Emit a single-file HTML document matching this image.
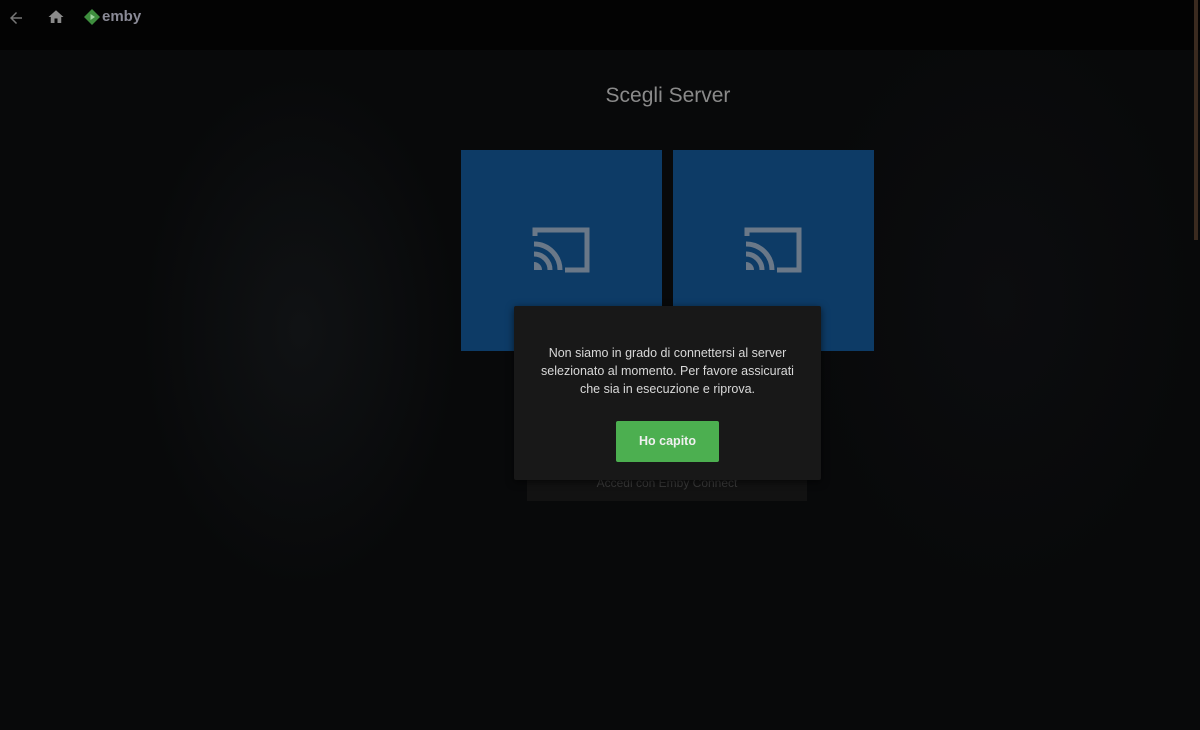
<!DOCTYPE html>
<html><head><meta charset="utf-8"><style>
html,body{margin:0;padding:0;width:1200px;height:730px;overflow:hidden;background:#08090a;font-family:"Liberation Sans",sans-serif;}
.bg{position:absolute;inset:0;background:
radial-gradient(ellipse 160px 260px at 300px 330px,#101214,transparent),
radial-gradient(ellipse 200px 300px at 1000px 300px,#0c0d0f,transparent),
#08090a;}
.hdr{position:absolute;left:0;top:0;width:1200px;height:50px;background:#030303;}
.sb{position:absolute;left:1194px;top:0;width:4px;height:240px;background:#3a2a1f;}
.title{position:absolute;left:0;width:1336px;top:84px;text-align:center;color:#8a8a8a;font-size:21px;}
.tile{position:absolute;top:150px;width:201px;height:201px;background:#0d3b66;}
.tile svg{position:absolute;left:71px;top:76px;}
.conn{position:absolute;left:527px;top:470px;width:280px;height:31px;background:#121212;color:#3a3a3a;font-size:12px;text-align:center;line-height:24px;padding-top:1px;box-sizing:border-box;}
.dlg{position:absolute;left:514px;top:306px;width:307px;height:174px;background:#181818;border-radius:2px;box-shadow:0 2px 8px rgba(0,0,0,.6);}
.dlg p{margin:0;position:absolute;left:0;right:0;top:38px;text-align:center;color:#d8d8d8;font-size:12.5px;line-height:18px;}
.btn{position:absolute;left:102px;top:115px;width:103px;height:41px;background:#4caf50;color:#f0f0f0;font-weight:bold;font-size:12.5px;text-align:center;line-height:41px;border-radius:2px;}
</style></head><body>
<div class="bg"></div>
<div class="hdr">
<svg style="position:absolute;left:7px;top:9px" width="18" height="18" viewBox="0 0 24 24"><path d="M20 11H7.8l5.6-5.6L12 4l-8 8 8 8 1.4-1.4L7.8 13H20z" fill="#777"/></svg>
<svg style="position:absolute;left:47px;top:8px" width="18" height="18" viewBox="0 0 24 24"><path d="M10 20v-6h4v6h5v-8h3L12 3 2 12h3v8z" fill="#8a8a8a"/></svg>
<svg style="position:absolute;left:84px;top:9px" width="16" height="16" viewBox="0 0 16 16"><path d="M8 0L16 8 8 16 0 8z" fill="#3e8e3e"/><path d="M6.5 5v6l4.5-3z" fill="#9ed49e"/></svg>
<div style="position:absolute;left:102px;top:8px;color:#8a8a96;font-size:15px;font-weight:bold;">emby</div>
</div>
<div class="sb"></div>
<div class="title">Scegli Server</div>
<div class="tile" style="left:461px"><svg width="58" height="48" viewBox="0 0 58 48"><path d="M3 10V4h52v40H33" fill="none" stroke="#6a7888" stroke-width="5"/><path d="M2 18a26 26 0 0 1 26 26M2 28a16 16 0 0 1 16 16" fill="none" stroke="#6a7888" stroke-width="5"/><path d="M2 36a8 8 0 0 1 8 8H2z" fill="#6a7888"/></svg></div>
<div class="tile" style="left:673px"><svg width="58" height="48" viewBox="0 0 58 48"><path d="M3 10V4h52v40H33" fill="none" stroke="#6a7888" stroke-width="5"/><path d="M2 18a26 26 0 0 1 26 26M2 28a16 16 0 0 1 16 16" fill="none" stroke="#6a7888" stroke-width="5"/><path d="M2 36a8 8 0 0 1 8 8H2z" fill="#6a7888"/></svg></div>
<div class="conn">Accedi con Emby Connect</div>
<div class="dlg"><p>Non siamo in grado di connettersi al server<br>selezionato al momento. Per favore assicurati<br>che sia in esecuzione e riprova.</p><div class="btn">Ho capito</div></div>
</body></html>
